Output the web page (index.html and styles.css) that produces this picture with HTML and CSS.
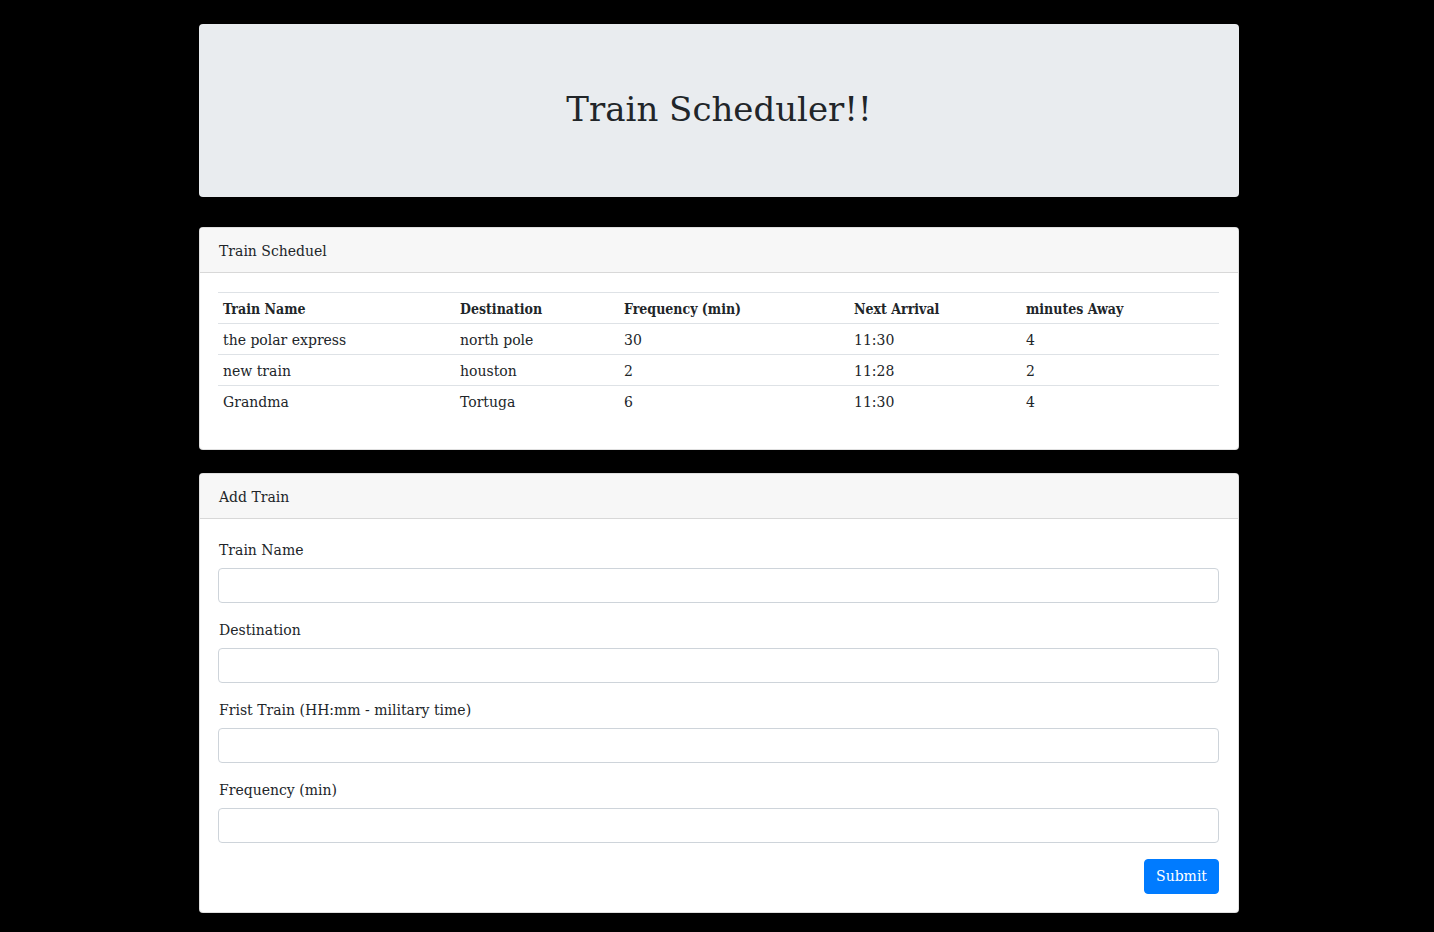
FILE: index.html
```html
<!DOCTYPE html>
<html>
<head>
<meta charset="utf-8">
<title>Train Scheduler</title>
<link rel="stylesheet" href="styles.css">
</head>
<body>
<div class="container">
  <div class="jumbotron">
    <h1 class="title">Train Scheduler!!</h1>
  </div>

  <div class="card card-schedule">
    <div class="card-header">Train Scheduel</div>
    <div class="card-body">
      <table class="table">
        <thead>
          <tr>
            <th class="c1">Train Name</th>
            <th class="c2">Destination</th>
            <th class="c3">Frequency (min)</th>
            <th class="c4">Next Arrival</th>
            <th class="c5">minutes Away</th>
          </tr>
        </thead>
        <tbody>
          <tr><td>the polar express</td><td>north pole</td><td>30</td><td>11:30</td><td>4</td></tr>
          <tr><td>new train</td><td>houston</td><td>2</td><td>11:28</td><td>2</td></tr>
          <tr><td>Grandma</td><td>Tortuga</td><td>6</td><td>11:30</td><td>4</td></tr>
        </tbody>
      </table>
    </div>
  </div>

  <div class="card card-add">
    <div class="card-header">Add Train</div>
    <div class="card-body">
      <form class="form">
        <div class="form-group">
          <label for="name">Train Name</label>
          <input id="name" class="form-control" type="text">
        </div>
        <div class="form-group">
          <label for="dest">Destination</label>
          <input id="dest" class="form-control" type="text">
        </div>
        <div class="form-group">
          <label for="first">Frist Train (HH:mm - military time)</label>
          <input id="first" class="form-control" type="text">
        </div>
        <div class="form-group last">
          <label for="freq">Frequency (min)</label>
          <input id="freq" class="form-control" type="text">
        </div>
        <div class="actions">
          <button type="button" class="btn">Submit</button>
        </div>
      </form>
    </div>
  </div>
</div>
</body>
</html>
```

FILE: styles.css
```css
* { box-sizing: border-box; }

html, body {
  margin: 0;
  padding: 0;
  background: #000;
}

body {
  font-family: "DejaVu Serif", "Liberation Serif", serif;
  font-size: 14px;
  line-height: 1.5;
  color: #212529;
}

.container {
  width: 1040px;
  margin: 0 auto;
  padding-top: 24px;
  padding-bottom: 20px;
  position: relative;
  left: 2px;
}

.jumbotron {
  background: #e9ecef;
  border-radius: 4px;
  height: 173px;
  display: flex;
  align-items: center;
  justify-content: center;
  margin-bottom: 30px;
}

.title {
  margin: 0;
  font-weight: 400;
  font-size: 34px;
  line-height: 1.2;
  color: #212529;
  padding-bottom: 3px;
}

.card {
  background: #fff;
  border: 1px solid rgba(0,0,0,0.125);
  border-radius: 4px;
  overflow: hidden;
}

.card-schedule { margin-bottom: 23px; }

.card-header {
  background: #f7f7f7;
  border-bottom: 1px solid rgba(0,0,0,0.125);
  height: 45px;
  padding: 2px 19px 0;
  display: flex;
  align-items: center;
}

.card-add .card-header { padding-top: 3px; }

.card-body {
  padding: 19px 19px 20px 18px;
}

.table {
  width: 100%;
  border-collapse: collapse;
  margin-bottom: 12px;
}

.table th, .table td {
  text-align: left;
  padding: 5px 5px 3px;
  height: 31px;
  border-top: 1px solid #dee2e6;
  vertical-align: middle;
}

.table th {
  font-family: "DejaVu Serif Condensed", "DejaVu Serif", serif;
  font-weight: 700;
}

.c1 { width: 237px; }
.c2 { width: 164px; }
.c3 { width: 230px; }
.c4 { width: 172px; }

.form-group {
  margin-bottom: 15px;
}

.form-group.last { margin-bottom: 16px; }

.form-group label {
  display: block;
  height: 23px;
  line-height: 22px;
  padding: 1px 0 0 1px;
  margin: 0 0 7px;
}

.card-add .card-body { padding-top: 19px; padding-bottom: 18px; }

.form-control {
  display: block;
  width: 100%;
  height: 35px;
  border: 1px solid #ced4da;
  border-radius: 4px;
  background: #fff;
  font: inherit;
  padding: 6px 12px;
}

.actions {
  display: flex;
  justify-content: flex-end;
}

.btn {
  background: #007bff;
  color: #fff;
  border: 1px solid #007bff;
  border-radius: 4px;
  font: inherit;
  height: 35px;
  padding: 1px 11px 0;
  cursor: pointer;
}
```
